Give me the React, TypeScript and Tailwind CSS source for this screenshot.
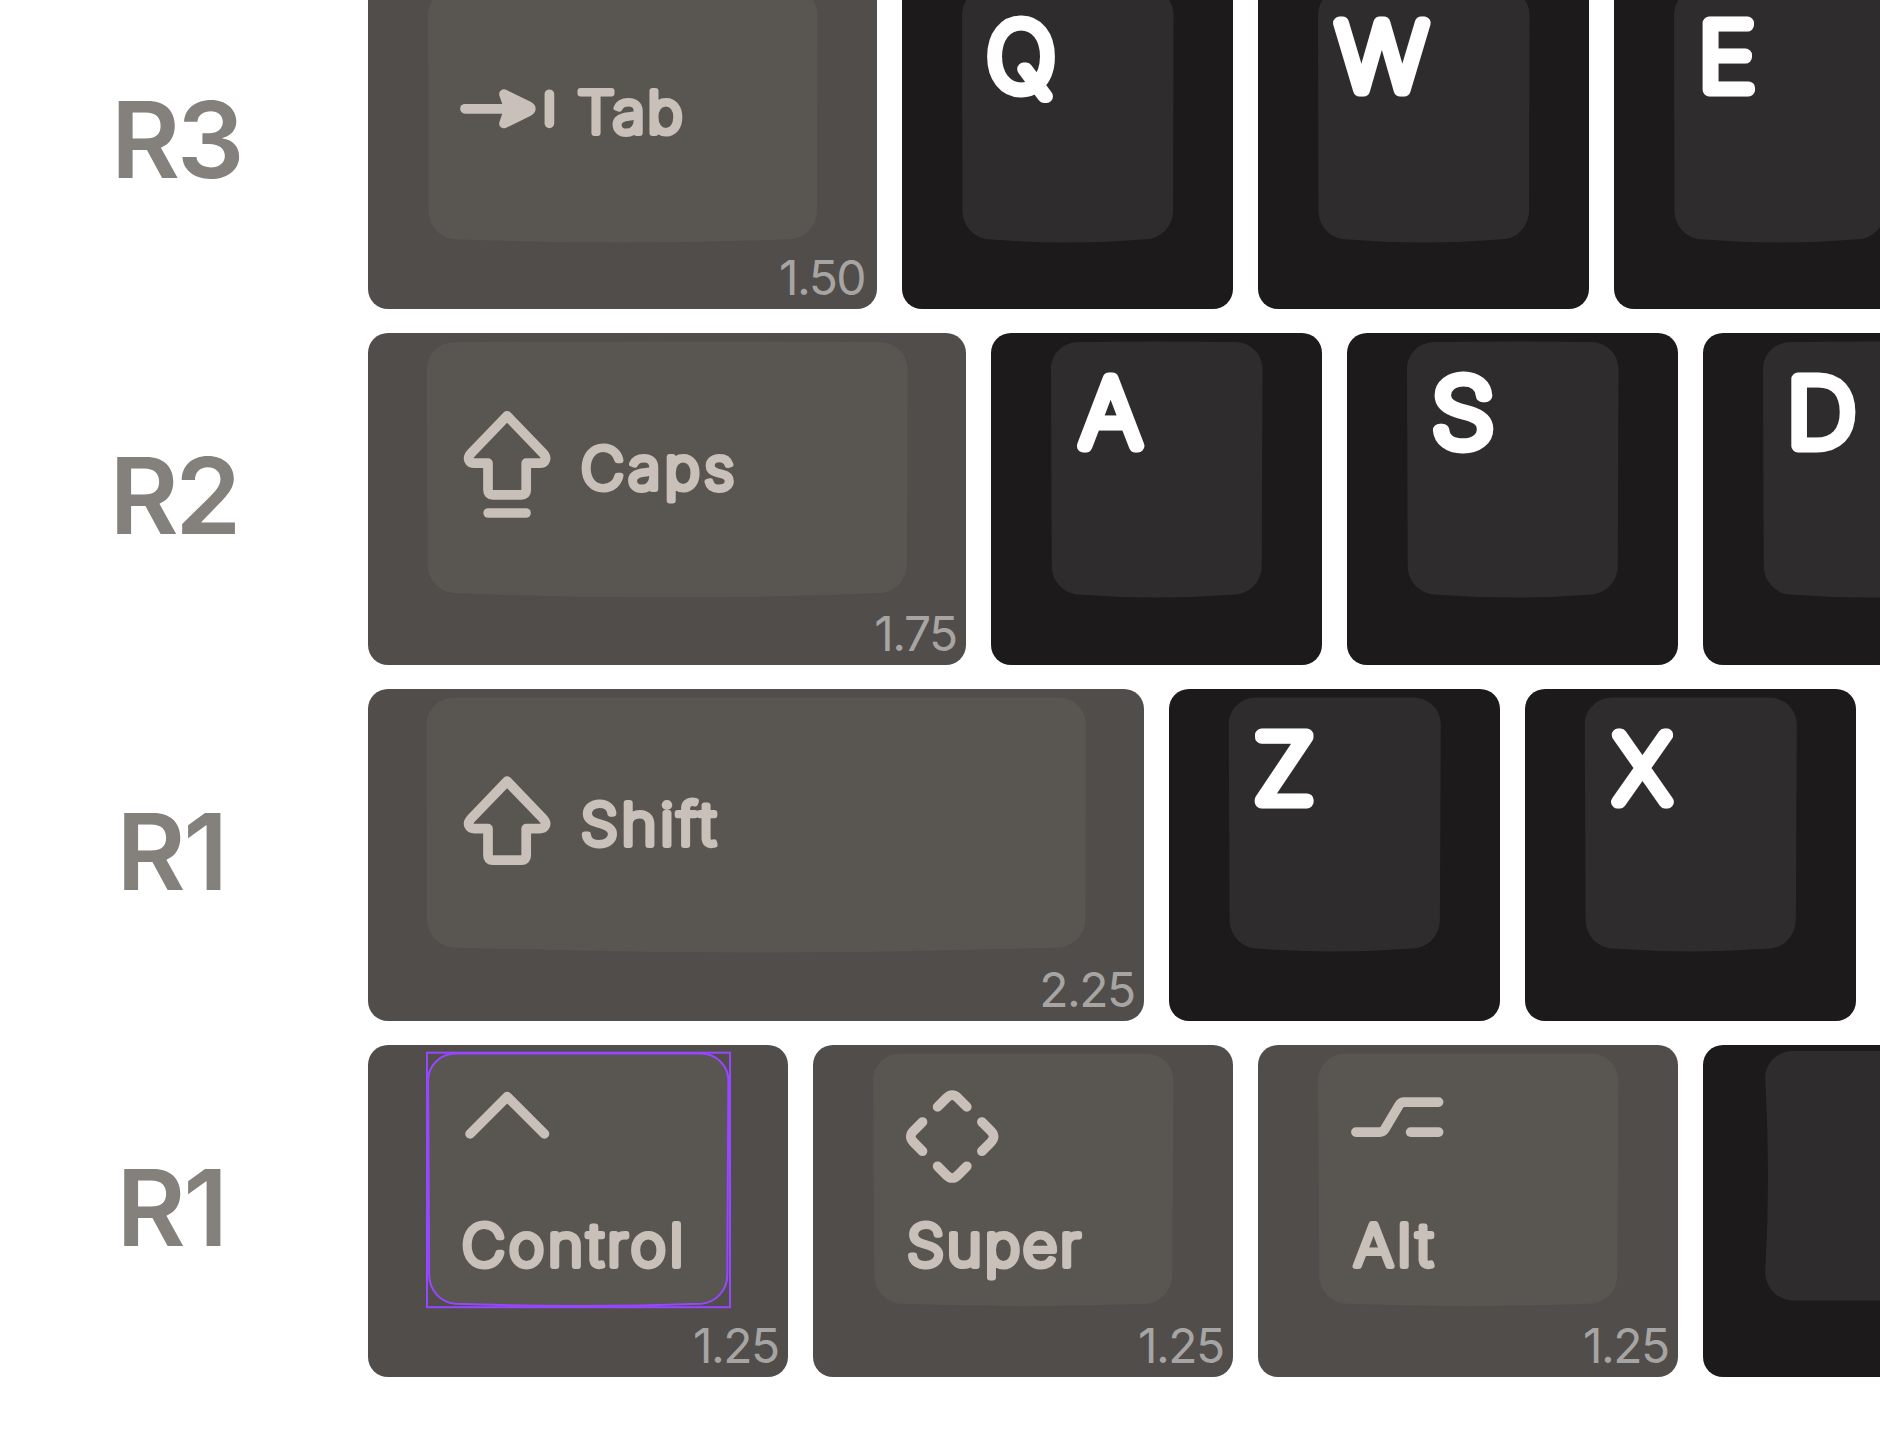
import type { ReactNode } from 'react';

const UNIT = 356;
const GAP = 24.5;
const KEY_HEIGHT = 331.5;
const LEGEND = '#c8c0b9';

type Surface = {
  top: number;
  bottom: number;
  sag: number;
  inset: number;
  insetBottom: number;
  bulge?: number;
  pinch?: number;
};

const SURFACES = {
  r3: { top: 11, bottom: 262.3, sag: 3.3, inset: 60, insetBottom: 60.4 },
  r2: { top: 9, bottom: 261.6, sag: 3, inset: 60, insetBottom: 60.7, bulge: 0.6 },
  r2wide: { top: 9.2, bottom: 260, sag: 4.6, inset: 58.8, insetBottom: 59.5, bulge: 0.8 },
  r1: { top: 8.6, bottom: 259.6, sag: 2.8, inset: 59.7, insetBottom: 60.6 },
  r1wide: { top: 8.6, bottom: 258.4, sag: 5, inset: 58.6, insetBottom: 59 },
  r0: { top: 8.6, bottom: 258.7, sag: 2.2, inset: 60.1, insetBottom: 61.2 },
  space: { top: 6, bottom: 255.4, sag: 0, inset: 62.2, insetBottom: 62.2, pinch: 2.8 },
} satisfies Record<string, Surface>;

function surfacePath(width: number, s: Surface) {
  const l = s.inset;
  const r = width - s.inset;
  const lb = s.insetBottom;
  const rb = width - s.insetBottom;
  const t = s.top;
  const b = s.bottom;
  const mid = (t + b) / 2;
  const pinch = (s.pinch ?? 0) * 2;
  return [
    `M${l} ${t + 27}`,
    `C${l} ${t + 12} ${l + 12} ${t} ${l + 28} ${t}`,
    `Q${width / 2} ${t - (s.bulge ?? 0) * 2} ${r - 28} ${t}`,
    `C${r - 12} ${t} ${r} ${t + 12} ${r} ${t + 27}`,
    `Q${(r + rb) / 2 - pinch} ${mid} ${rb} ${b - 29}`,
    `C${rb} ${b - 13} ${rb - 12} ${b - 1} ${rb - 26} ${b}`,
    `Q${width / 2} ${b + s.sag * 2} ${lb + 26} ${b}`,
    `C${lb + 12} ${b - 1} ${lb} ${b - 13} ${lb} ${b - 29}`,
    `Q${(l + lb) / 2 + pinch} ${mid} ${l} ${t + 27}Z`,
  ].join('');
}

type KeyProps = {
  units: number;
  surface: Surface;
  dark?: boolean;
  selected?: boolean;
  size?: string;
  sizeClass?: string;
  children?: ReactNode;
};

function Key({ units, surface, dark, selected, size, sizeClass, children }: KeyProps) {
  const width = units * UNIT - GAP;
  const d = surfacePath(width, surface);
  return (
    <div
      className={`relative h-[331.5px] shrink-0 rounded-[20px] ${dark ? 'bg-[#1c1a1b]' : 'bg-[#514d4a]'}`}
      style={{ width }}
    >
      <svg className="absolute inset-0" width={width} height={KEY_HEIGHT} aria-hidden="true">
        <path d={d} fill={dark ? '#2e2c2d' : '#595551'} />
        {selected && (
          <g fill="none" stroke="#9747ff" strokeWidth="2">
            <path d={d} />
            <rect x="59" y="7.7" width="303" height="254.5" />
          </g>
        )}
      </svg>
      <div className="relative pt-[30px] pl-[69.6px]">{children}</div>
      {size && (
        <span
          className={`absolute bottom-[7.2px] text-[48px] leading-none font-[370] tracking-[-1.5px] text-[#a6a5a3] ${sizeClass ?? 'right-[9.3px]'}`}
        >
          {size}
        </span>
      )}
    </div>
  );
}

function Letter({ char, x, scale }: { char: string; x: number; scale: number }) {
  return (
    <svg width="130" height="120" viewBox="69.2 29.4 130 120" className="overflow-visible">
      <text
        transform={`translate(${x} 112.8) scale(${scale} 1)`}
        fontSize="92.5"
        fontWeight="100"
        fill="#fff"
        stroke="#fff"
        strokeWidth="13"
        strokeLinejoin="round"
      >
        {char}
      </text>
    </svg>
  );
}

function Word({ text, width, spacing, offset = 0 }: { text: string; width: number; spacing: number; offset?: number }) {
  return (
    <svg width={width} height="80" viewBox={`0 0 ${width} 80`} className="overflow-visible">
      <text
        transform={`translate(${offset + 0.5} 55.9) scale(1.04 1)`}
        fontSize="57.6"
        fontWeight="180"
        letterSpacing={spacing}
        fill={LEGEND}
        stroke={LEGEND}
        strokeWidth="6.1"
        strokeLinejoin="round"
      >
        {text}
      </text>
    </svg>
  );
}

function Icon({ height, children }: { height: number; children: ReactNode }) {
  return (
    <svg
      width="130"
      height={height}
      viewBox={`69.4 29.5 130 ${height}`}
      fill="none"
      stroke={LEGEND}
      strokeWidth="9.7"
      strokeLinecap="round"
      strokeLinejoin="round"
      aria-hidden="true"
    >
      {children}
    </svg>
  );
}

const ARROW =
  'M139.5 82.3L103.6 119.6C98.6 125 101.6 129.7 107.1 129.7H120.4V156.5Q120.4 161.3 125.2 161.3H153.8Q158.6 161.3 158.6 156.5V129.7H171.9C177.4 129.7 180.4 125 175.4 119.6Z';

function TabIcon() {
  return (
    <Icon height={170}>
      <path d="M97.4 131.3H140" />
      <path fill={LEGEND} d="M136.4 116.7L160.4 128.4Q166 131.3 160.4 134.2L136.4 146L141.4 131.3Z" />
      <path d="M181.8 116.8V145.8" />
    </Icon>
  );
}

function CapsIcon() {
  return (
    <Icon height={170}>
      <path d={ARROW} />
      <path d="M120.6 179.5H158.4" />
    </Icon>
  );
}

function ShiftIcon() {
  return (
    <Icon height={170}>
      <path d={ARROW} transform="translate(0 9.4)" />
    </Icon>
  );
}

function ControlIcon() {
  return (
    <Icon height={135}>
      <path d="M102.5 88.4L139.6 51.2L176.8 88.4" />
    </Icon>
  );
}

function SuperIcon() {
  return (
    <Icon height={135}>
      {[0, 90, 180, 270].map((angle) => (
        <path
          key={angle}
          d="M125 61.4L133.9 52.5Q139.6 46.9 145.3 52.5L154.2 61.4"
          transform={`rotate(${angle} 139.6 91.1)`}
        />
      ))}
    </Icon>
  );
}

function AltIcon() {
  return (
    <Icon height={135}>
      <path d="M98.3 86.6H122Q125.5 86.6 127.3 83.6L141.5 59.6Q143.3 56.6 147 56.6H181" />
      <path d="M153 86.6H181" />
    </Icon>
  );
}

function Inline({ children }: { children: ReactNode }) {
  return <div className="flex items-start">{children}</div>;
}

function WordBeside({ children }: { children: ReactNode }) {
  return <div className="pt-[69.5px]">{children}</div>;
}

function Stacked({ icon, children }: { icon: ReactNode; children: ReactNode }) {
  return (
    <div className="flex flex-col items-start">
      {icon}
      <div className="pl-[20px]">{children}</div>
    </div>
  );
}

function Row({ label, labelClass, children }: { label: string; labelClass: string; children: ReactNode }) {
  return (
    <div className="flex gap-[24.5px]">
      <div className="w-[343.1px] shrink-0 pt-[110.1px]">
        <span className={`block text-[106px] leading-none font-semibold text-[#84807b] ${labelClass}`}>{label}</span>
      </div>
      {children}
    </div>
  );
}

export default function App() {
  return (
    <main className="h-[1438px] w-[1880px] overflow-hidden bg-white font-['Inter',sans-serif] [&_svg]:block">
      <div className="-mt-[22.7px] flex flex-col gap-[24.5px]">
        <Row label="R3" labelClass="pl-[111px] tracking-[-3.2px]">
          <Key units={1.5} surface={SURFACES.r3} size="1.50" sizeClass="right-[12px]">
            <Inline>
              <TabIcon />
              <WordBeside>
                <Word text="Tab" width={150} offset={9.8} spacing={2.2} />
              </WordBeside>
            </Inline>
          </Key>
          <Key units={1} surface={SURFACES.r3} dark>
            <Letter char="Q" x={85.3} scale={0.985} />
          </Key>
          <Key units={1} surface={SURFACES.r3} dark>
            <Letter char="W" x={79} scale={1.05} />
          </Key>
          <Key units={1} surface={SURFACES.r3} dark>
            <Letter char="E" x={84.8} scale={1.05} />
          </Key>
        </Row>

        <Row label="R2" labelClass="pl-[109.5px] tracking-[-3.5px]">
          <Key units={1.75} surface={SURFACES.r2wide} size="1.75">
            <Inline>
              <CapsIcon />
              <WordBeside>
                <Word text="Caps" width={200} offset={13.2} spacing={3.9} />
              </WordBeside>
            </Inline>
          </Key>
          <Key units={1} surface={SURFACES.r2} dark>
            <Letter char="A" x={89.6} scale={1.02} />
          </Key>
          <Key units={1} surface={SURFACES.r2} dark>
            <Letter char="S" x={85.5} scale={1.09} />
          </Key>
          <Key units={1} surface={SURFACES.r2} dark>
            <Letter char="D" x={84.5} scale={1.035} />
          </Key>
        </Row>

        <Row label="R1" labelClass="pl-[116.5px] tracking-[-2.5px]">
          <Key units={2.25} surface={SURFACES.r1wide} size="2.25">
            <Inline>
              <ShiftIcon />
              <WordBeside>
                <Word text="Shift" width={200} offset={13.2} spacing={3.5} />
              </WordBeside>
            </Inline>
          </Key>
          <Key units={1} surface={SURFACES.r1} dark>
            <Letter char="Z" x={85.5} scale={1.065} />
          </Key>
          <Key units={1} surface={SURFACES.r1} dark>
            <Letter char="X" x={89.8} scale={0.975} />
          </Key>
        </Row>

        <Row label="R1" labelClass="pl-[116.5px] tracking-[-2.5px]">
          <Key units={1.25} surface={SURFACES.r0} size="1.25" selected>
            <Stacked icon={<ControlIcon />}>
              <Word text="Control" width={250} offset={4.2} spacing={3.8} />
            </Stacked>
          </Key>
          <Key units={1.25} surface={SURFACES.r0} size="1.25">
            <Stacked icon={<SuperIcon />}>
              <Word text="Super" width={220} offset={4.4} spacing={2.6} />
            </Stacked>
          </Key>
          <Key units={1.25} surface={SURFACES.r0} size="1.25">
            <Stacked icon={<AltIcon />}>
              <Word text="Alt" width={150} offset={6.6} spacing={4} />
            </Stacked>
          </Key>
          <Key units={6.25} surface={SURFACES.space} dark />
        </Row>
      </div>
    </main>
  );
}
